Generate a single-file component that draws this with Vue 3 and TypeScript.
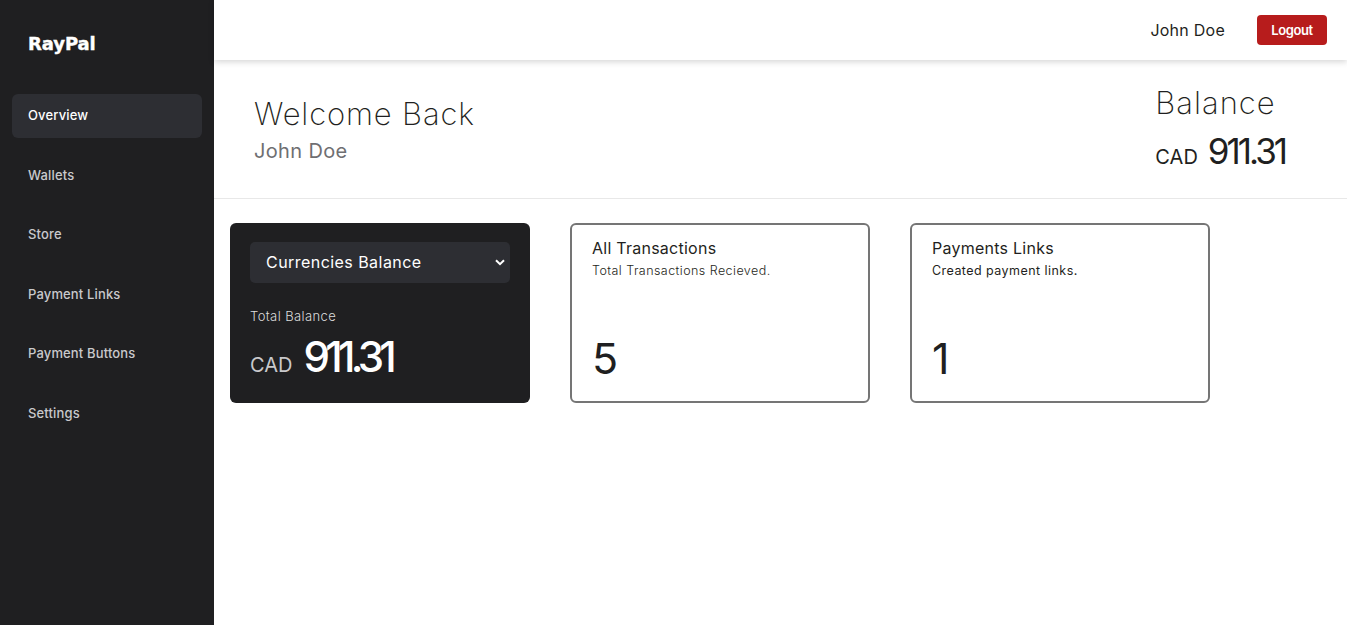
<script setup lang="ts">
const navItems: string[] = ['Overview', 'Wallets', 'Store', 'Payment Links', 'Payment Buttons', 'Settings']
</script>

<template>
  <div class="layout">
    <aside class="sidebar">
      <div class="logo">RayPal</div>
      <nav class="nav">
        <a v-for="(item, i) in navItems" :key="item" class="nav-item" :class="{ active: i === 0 }">{{ item }}</a>
      </nav>
    </aside>
    <div class="main">
      <header class="topbar">
        <span class="user">John Doe</span>
        <button class="logout">Logout</button>
      </header>
      <section class="welcome">
        <div class="greet">
          <h1>Welcome Back</h1>
          <h2>John Doe</h2>
        </div>
        <div class="balance">
          <div class="balance-title">Balance</div>
          <div class="balance-amount"><span class="cur">CAD</span><span class="num">911.31</span></div>
        </div>
      </section>
      <section class="cards">
        <div class="card dark">
          <div class="select">
            <span>Currencies Balance</span>
            <svg width="10" height="7" viewBox="0 0 10 7"><path d="M1 1.2 5 5.2 9 1.2" fill="none" stroke="#fff" stroke-width="2" /></svg>
          </div>
          <div class="total-label">Total Balance</div>
          <div class="total"><span class="cur">CAD</span><span class="num">911.31</span></div>
        </div>
        <div class="card outline">
          <div class="card-title">All Transactions</div>
          <div class="card-sub light">Total Transactions Recieved.</div>
          <div class="card-num">5</div>
        </div>
        <div class="card outline">
          <div class="card-title">Payments Links</div>
          <div class="card-sub">Created payment links.</div>
          <div class="card-num">1</div>
        </div>
      </section>
    </div>
  </div>
</template>

<style>
html, body { margin: 0; background: #fff; }
</style>

<style scoped>
.layout {
  display: flex;
  height: 625px;
  overflow: hidden;
  font-family: "Inter", "Liberation Sans", sans-serif;
  color: #1f1f21;
}
.sidebar {
  width: 214px;
  flex: none;
  box-sizing: border-box;
  background: #1f1f21;
  padding: 33px 12px 0;
}
.logo {
  font-family: "DejaVu Sans", sans-serif;
  font-weight: 700;
  font-size: 18px;
  line-height: 22px;
  color: #fff;
  padding-left: 16px;
  letter-spacing: -0.1px;
  -webkit-text-stroke: 0.4px #fff;
}
.nav {
  display: flex;
  flex-direction: column;
  margin-top: 39px;
  gap: 15.5px;
}
.nav-item {
  display: block;
  height: 44px;
  line-height: 42px;
  padding-left: 16px;
  border-radius: 6px;
  font-size: 13px;
  font-weight: 500;
  letter-spacing: 0.15px;
  color: #c9c9cc;
}
.nav-item.active {
  background: #2d2e33;
  color: #fff;
}
.main {
  flex: 1;
  min-width: 0;
}
.topbar {
  height: 60px;
  box-sizing: border-box;
  display: flex;
  align-items: center;
  justify-content: flex-end;
  gap: 32px;
  padding-right: 20px;
  box-shadow: 0 2px 6px rgba(0, 0, 0, 0.16);
  position: relative;
}
.user {
  font-size: 16px;
  letter-spacing: 0.25px;
  color: #1f1f21;
}
.logout {
  width: 70px;
  height: 30px;
  padding: 0;
  border: 0;
  border-radius: 4px;
  background: #b71c1c;
  color: #fff;
  font-family: inherit;
  font-size: 13px;
  font-weight: 600;
  letter-spacing: -0.4px;
}
.welcome {
  height: 139px;
  box-sizing: border-box;
  border-bottom: 1px solid #e8e8e8;
  display: flex;
  justify-content: space-between;
  padding: 33px 62px 0 40px;
}
.greet h1 {
  margin: 0;
  font-size: 31px;
  line-height: 41px;
  font-weight: 200;
  letter-spacing: 0.85px;
}
.greet h2 {
  margin: 0;
  font-size: 20px;
  line-height: 34px;
  font-weight: 400;
  letter-spacing: 0.35px;
  color: #6f6f72;
}
.balance {
  margin-top: -10px;
}
.balance-title {
  font-size: 31px;
  line-height: 40px;
  font-weight: 200;
  letter-spacing: 1px;
}
.balance-amount {
  margin-top: 7px;
  display: flex;
  align-items: baseline;
  gap: 10px;
}
.balance-amount .cur {
  font-size: 20px;
}
.balance-amount .num {
  font-size: 35px;
  line-height: 42px;
  letter-spacing: -3px;
}
.cards {
  display: flex;
  gap: 40px;
  padding: 24px 16px;
}
.card {
  width: 300px;
  height: 180px;
  box-sizing: border-box;
  border-radius: 6px;
}
.dark {
  background: #1f1f21;
  padding: 19px 20px;
  color: #fff;
}
.select {
  height: 41px;
  box-sizing: border-box;
  background: #2d2e33;
  border-radius: 5px;
  padding: 0 5px 0 16px;
  display: flex;
  align-items: center;
  justify-content: space-between;
  font-size: 16px;
  letter-spacing: 0.45px;
  line-height: 39px;
}
.total-label {
  margin-top: 24px;
  font-size: 13px;
  line-height: 18px;
  font-weight: 300;
  letter-spacing: 0.4px;
  color: #dcdcdc;
}
.total {
  margin-top: 6px;
  display: flex;
  align-items: baseline;
  gap: 11px;
}
.total .cur {
  font-size: 20px;
  color: #c9c9cc;
}
.total .num {
  font-size: 42px;
  line-height: 52px;
  letter-spacing: -4.7px;
  font-weight: 500;
}
.outline {
  border: 2px solid #757575;
  padding: 12px 20px;
  display: flex;
  flex-direction: column;
}
.card-title {
  font-size: 16px;
  line-height: 22px;
  letter-spacing: 0.25px;
}
.card-sub {
  margin-top: 2px;
  font-size: 12.5px;
  line-height: 20px;
  letter-spacing: 0.45px;
  color: #1f1f21;
}
.card-sub.light {
  font-weight: 300;
}
.card-num {
  margin-top: 51px;
  font-size: 43px;
  line-height: 52px;
  font-weight: 400;
}
</style>
